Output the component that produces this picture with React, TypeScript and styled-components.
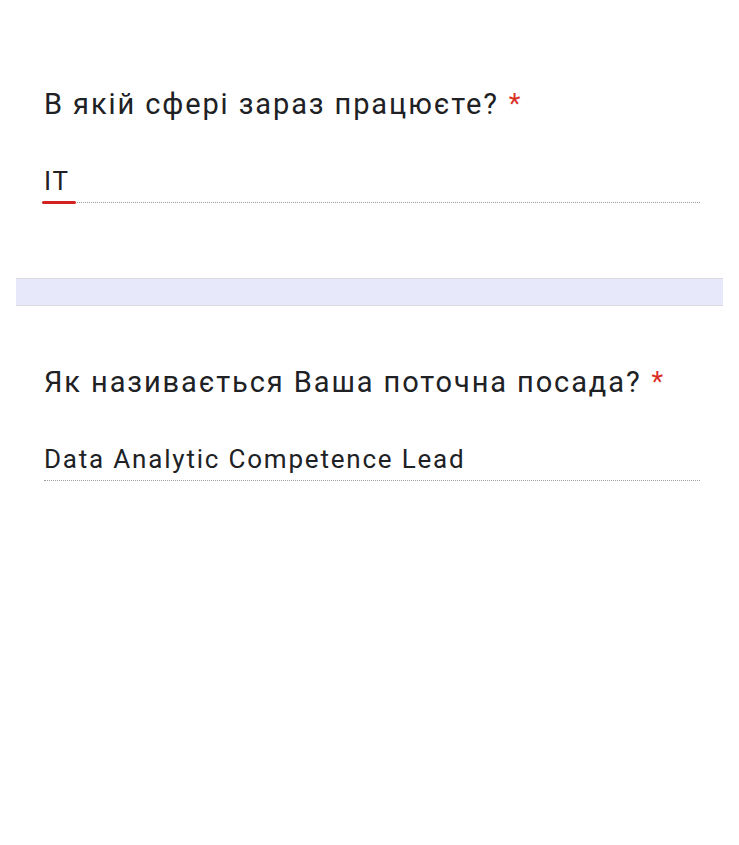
import React from "react";
import styled, { createGlobalStyle } from "styled-components";

const Global = createGlobalStyle`
  html, body { margin: 0; padding: 0; background: #ffffff; }
  body { font-family: Roboto, "Noto Sans", Arial, sans-serif; color: #202124; }
`;

const Page = styled.div`
  width: 739px;
  min-height: 845px;
  padding: 0 16px;
  box-sizing: border-box;
  display: flex;
  flex-direction: column;
`;

const Card = styled.section<{ $top: number; $bottom: number }>`
  padding: ${(p) => p.$top}px 23px ${(p) => p.$bottom}px 28px;
  display: flex;
  flex-direction: column;
`;

const Question = styled.div`
  font-size: 29px;
  line-height: 36px;
  letter-spacing: 1.9px;
  color: #202124;
  display: flex;
  gap: 10px;
`;

const Required = styled.span`
  color: #d93025;
  font-size: 27px;
`;

const AnswerLine = styled.div<{ $mt: number }>`
  margin-top: ${(p) => p.$mt}px;
  border-bottom: 1px dotted #9aa0a6;
  font-size: 26px;
  line-height: 34px;
  letter-spacing: 1.8px;
  padding-bottom: 4px;
  color: #202124;
`;

const Misspelled = styled.span`
  position: relative;
  display: inline-block;
  &::after {
    content: "";
    position: absolute;
    left: -2px;
    width: 34px;
    bottom: -6px;
    height: 3px;
    border-radius: 2px;
    background: #d32222;
  }
`;

const Divider = styled.div`
  height: 26px;
  background: #e8e8fb;
  border-top: 1px solid #dadce0;
  border-bottom: 1px solid #dadce0;
`;

export default function App() {
  return (
    <>
      <Global />
      <Page>
        <Card $top={86} $bottom={75}>
          <Question>
            <span>В якій сфері зараз працюєте?</span>
            <Required>*</Required>
          </Question>
          <AnswerLine $mt={42}>
            <Misspelled>IT</Misspelled>
          </AnswerLine>
        </Card>
        <Divider />
        <Card $top={58} $bottom={60}>
          <Question>
            <span>Як називається Ваша поточна посада?</span>
            <Required>*</Required>
          </Question>
          <AnswerLine $mt={42}>Data Analytic Competence Lead</AnswerLine>
        </Card>
      </Page>
    </>
  );
}
